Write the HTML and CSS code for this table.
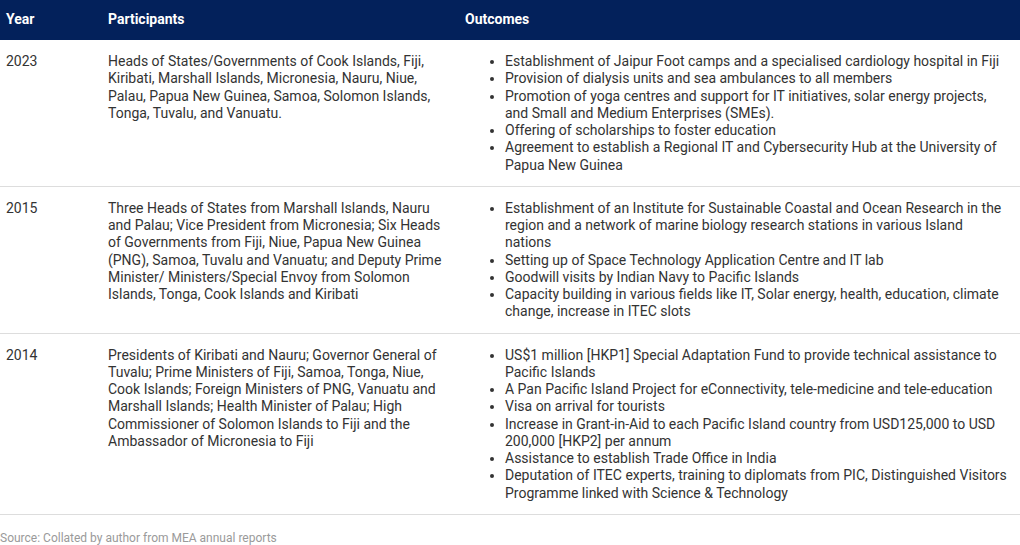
FILE: index.html
```html
<!DOCTYPE html>
<html lang="en">
<head>
<meta charset="utf-8">
<title>Summits</title>
<link rel="stylesheet" href="styles.css">
</head>
<body>
<table class="data">
  <colgroup>
    <col class="c-year">
    <col class="c-part">
    <col class="c-out">
  </colgroup>
  <thead>
    <tr><th>Year</th><th>Participants</th><th class="th-out">Outcomes</th></tr>
  </thead>
  <tbody>
    <tr>
      <td>2023</td>
      <td>Heads of States/Governments of Cook Islands, Fiji, Kiribati, Marshall Islands, Micronesia, Nauru, Niue, Palau, Papua New Guinea, Samoa, Solomon Islands, Tonga, Tuvalu, and Vanuatu.</td>
      <td class="out">
        <ul>
          <li>Establishment of Jaipur Foot camps and a specialised cardiology hospital in Fiji</li>
          <li>Provision of dialysis units and sea ambulances to all members</li>
          <li>Promotion of yoga centres and support for IT initiatives, solar energy projects, and Small and Medium Enterprises (SMEs).</li>
          <li>Offering of scholarships to foster education</li>
          <li>Agreement to establish a Regional IT and Cybersecurity Hub at the University of Papua New Guinea</li>
        </ul>
      </td>
    </tr>
    <tr>
      <td>2015</td>
      <td>Three Heads of States from Marshall Islands, Nauru and Palau; Vice President from Micronesia; Six Heads of Governments from Fiji, Niue, Papua New Guinea (PNG), Samoa, Tuvalu and Vanuatu; and Deputy Prime Minister/ Ministers/Special Envoy from Solomon Islands, Tonga, Cook Islands and Kiribati</td>
      <td class="out">
        <ul>
          <li>Establishment of an Institute for Sustainable Coastal and Ocean Research in the region and a network of marine biology research stations in various Island nations</li>
          <li>Setting up of Space Technology Application Centre and IT lab</li>
          <li>Goodwill visits by Indian Navy to Pacific Islands</li>
          <li>Capacity building in various fields like IT, Solar energy, health, education, climate change, increase in ITEC slots</li>
        </ul>
      </td>
    </tr>
    <tr>
      <td>2014</td>
      <td>Presidents of Kiribati and Nauru; Governor General of Tuvalu; Prime Ministers of Fiji, Samoa, Tonga, Niue, Cook Islands; Foreign Ministers of PNG, Vanuatu and Marshall Islands; Health Minister of Palau; High Commissioner of Solomon Islands to Fiji and the Ambassador of Micronesia to Fiji</td>
      <td class="out">
        <ul>
          <li>US$1 million [HKP1] Special Adaptation Fund to provide technical assistance to Pacific Islands</li>
          <li>A Pan Pacific Island Project for eConnectivity, tele-medicine and tele-education</li>
          <li>Visa on arrival for tourists</li>
          <li>Increase in Grant-in-Aid to each Pacific Island country from USD125,000 to USD 200,000 [HKP2] per annum</li>
          <li>Assistance to establish Trade Office in India</li>
          <li>Deputation of ITEC experts, training to diplomats from PIC, Distinguished Visitors Programme linked with Science &amp; Technology</li>
        </ul>
      </td>
    </tr>
  </tbody>
</table>
<p class="source">Source: Collated by author from MEA annual reports</p>
</body>
</html>
```

FILE: styles.css
```css
html, body {
  margin: 0;
  padding: 0;
  background: #ffffff;
}
body {
  font-family: Roboto, "Liberation Sans", sans-serif;
  color: #333333;
}
.data {
  width: 1020px;
  border-collapse: collapse;
  table-layout: fixed;
  font-size: 14px;
  line-height: 17.25px;
}
.c-year { width: 102px; }
.c-part { width: 357px; }
.data th {
  background: #03215b;
  color: #ffffff;
  font-weight: 700;
  text-align: left;
  height: 40px;
  padding: 0 6px;
  box-sizing: border-box;
  vertical-align: middle;
}
.data td {
  vertical-align: top;
  padding: 13px 6px 12px 6px;
  border-bottom: 1px solid #dddddd;
}
.data td.out {
  padding-right: 9px;
}
.data ul {
  margin: 0;
  padding-left: 40px;
}
.source {
  margin: 16px 0 0 0;
  font-size: 12px;
  line-height: 14px;
  color: #9a9a9a;
}
```
